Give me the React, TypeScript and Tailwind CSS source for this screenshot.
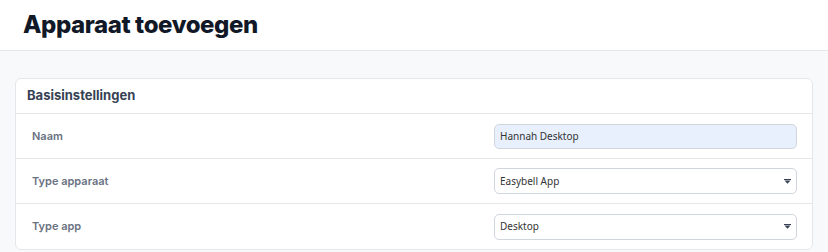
import React from 'react';

const Caret: React.FC = () => (
  <svg width="7" height="5" viewBox="0 0 7 5" className="text-gray-700">
    <rect x="0" y="0" width="7" height="1" fill="currentColor" />
    <path d="M0.5 1.5 L6.5 1.5 L3.5 4.8 Z" fill="currentColor" />
  </svg>
);

interface RowProps {
  label: string;
  children: React.ReactNode;
  last?: boolean;
}

const Row: React.FC<RowProps> = ({ label, children, last }) => (
  <div className={`flex items-center h-[45px] pl-4 pr-[15px] ${last ? '' : 'border-b border-gray-200'}`}>
    <div className="w-[462px] text-[11px] font-semibold text-gray-500">{label}</div>
    <div className="flex-1">{children}</div>
  </div>
);

const SelectBox: React.FC<{ value: string }> = ({ value }) => (
  <div className="flex items-center justify-between h-[26px] pl-[5px] pr-[5px] rounded-[5px] border border-gray-300 bg-white font-['Noto_Sans',sans-serif] text-[10px] text-[#333]">
    <span>{value}</span>
    <Caret />
  </div>
);

export default function App() {
  return (
    <div className="w-[828px] h-[252px] bg-[#f8f9fb] font-['Inter',sans-serif] overflow-hidden">
      <header className="h-[51px] bg-white border-b border-gray-200 px-[23px] flex items-center">
        <h1 className="text-[24px] font-extrabold text-[#111827] tracking-[-0.4px]">Apparaat toevoegen</h1>
      </header>
      <div className="px-[15px] pt-[27px]">
        <div className="bg-white border border-gray-200 rounded-md">
          <div className="h-[35px] flex items-center px-[11px] border-b border-gray-200">
            <h2 className="text-[13px] font-bold text-gray-700">Basisinstellingen</h2>
          </div>
          <Row label="Naam">
            <div className="h-[25px] flex items-center pl-[5px] rounded-[5px] border border-gray-300 bg-[#e8f0fe] font-['Noto_Sans',sans-serif] text-[10px] text-[#333]">
              Hannah Desktop
            </div>
          </Row>
          <Row label="Type apparaat">
            <SelectBox value="Easybell App" />
          </Row>
          <Row label="Type app" last>
            <SelectBox value="Desktop" />
          </Row>
        </div>
      </div>
    </div>
  );
}
